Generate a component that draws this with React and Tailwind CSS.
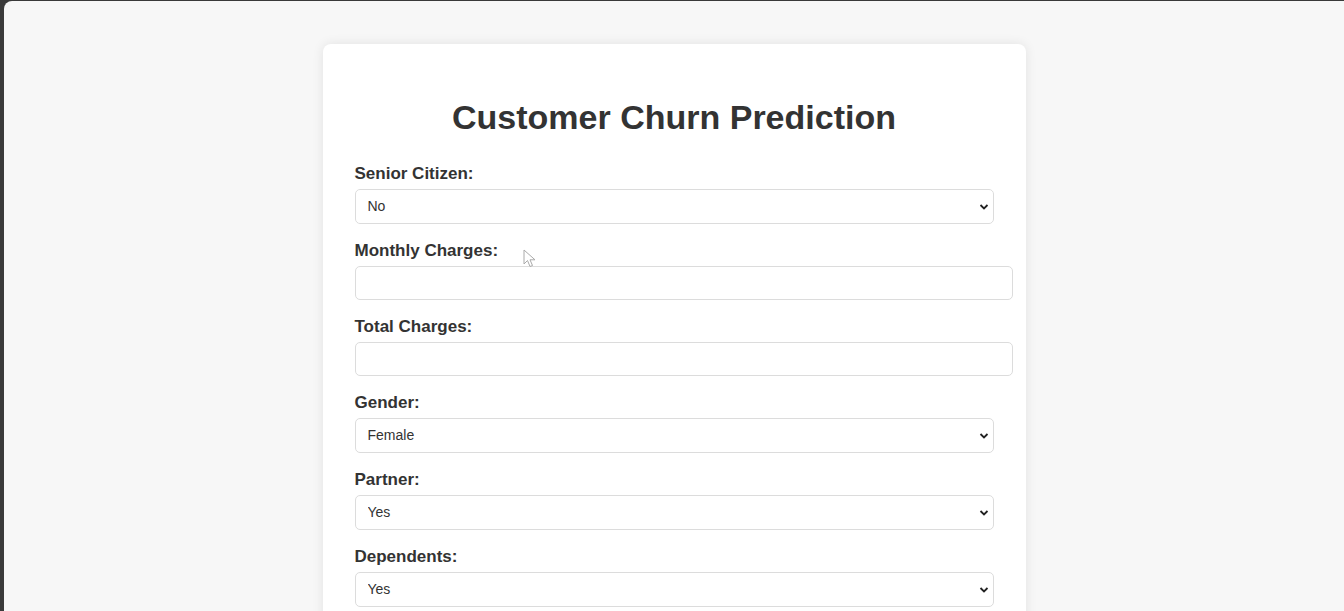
import React from "react";

const font = { fontFamily: '"Liberation Sans", Arial, sans-serif' };

function SelectField({ label, value, options }) {
  return (
    <div className="flex flex-col">
      <label className="pt-px text-[17px] leading-[20px] font-bold text-[#333]">{label}</label>
      <div className="relative mt-[5px] w-[639px]">
        <select
          defaultValue={value}
          className="h-[35px] w-full appearance-none rounded-[5px] border border-[#dcdcdc] bg-white pl-[12px] text-[14px] text-[#333] outline-none"
          style={font}
        >
          {options.map((o) => (
            <option key={o}>{o}</option>
          ))}
        </select>
        <svg
          className="pointer-events-none absolute right-[5px] top-[14px]"
          width="10"
          height="8"
          viewBox="0 0 10 8"
        >
          <path d="M1.5 2 L5 5.5 L8.5 2" fill="none" stroke="#222" strokeWidth="1.8" />
        </svg>
      </div>
    </div>
  );
}

function InputField({ label }) {
  return (
    <div className="flex flex-col">
      <label className="pt-px text-[17px] leading-[20px] font-bold text-[#333]">{label}</label>
      <input
        type="text"
        className="mt-[5px] h-[34px] w-[658px] rounded-[5px] border border-[#dcdcdc] bg-white px-[10px] text-[14px] outline-none"
        style={font}
      />
    </div>
  );
}

export default function App() {
  return (
    <div className="h-[611px] w-[1344px] overflow-hidden bg-[#3a3a3a] pl-[4px] pt-px" style={font}>
      <div className="relative h-full w-full overflow-hidden rounded-tl-[8px] bg-[#f7f7f7] pt-[43px]">
        <div className="mx-auto w-[703px] rounded-[8px] bg-white px-8 pt-[55px] pb-8 shadow-[0_0_12px_rgba(0,0,0,0.09)]">
          <h1 className="text-center text-[34px] leading-[37px] font-bold text-[#333]">
            Customer Churn Prediction
          </h1>
          <div className="mt-[27px] flex flex-col gap-[16px]">
            <SelectField label="Senior Citizen:" value="No" options={["No", "Yes"]} />
            <InputField label="Monthly Charges:" />
            <InputField label="Total Charges:" />
            <SelectField label="Gender:" value="Female" options={["Female", "Male"]} />
            <SelectField label="Partner:" value="Yes" options={["Yes", "No"]} />
            <SelectField label="Dependents:" value="Yes" options={["Yes", "No"]} />
          </div>
        </div>
        <svg
          className="pointer-events-none absolute left-[519px] top-[248px]"
          width="14"
          height="20"
          viewBox="0 0 14 20"
        >
          <path
            d="M1 1 L1 15 L4.5 11.5 L7 17.5 L9.5 16.5 L7 10.8 L12 10.8 Z"
            fill="white"
            stroke="#aaa"
            strokeWidth="1"
          />
        </svg>
      </div>
    </div>
  );
}
